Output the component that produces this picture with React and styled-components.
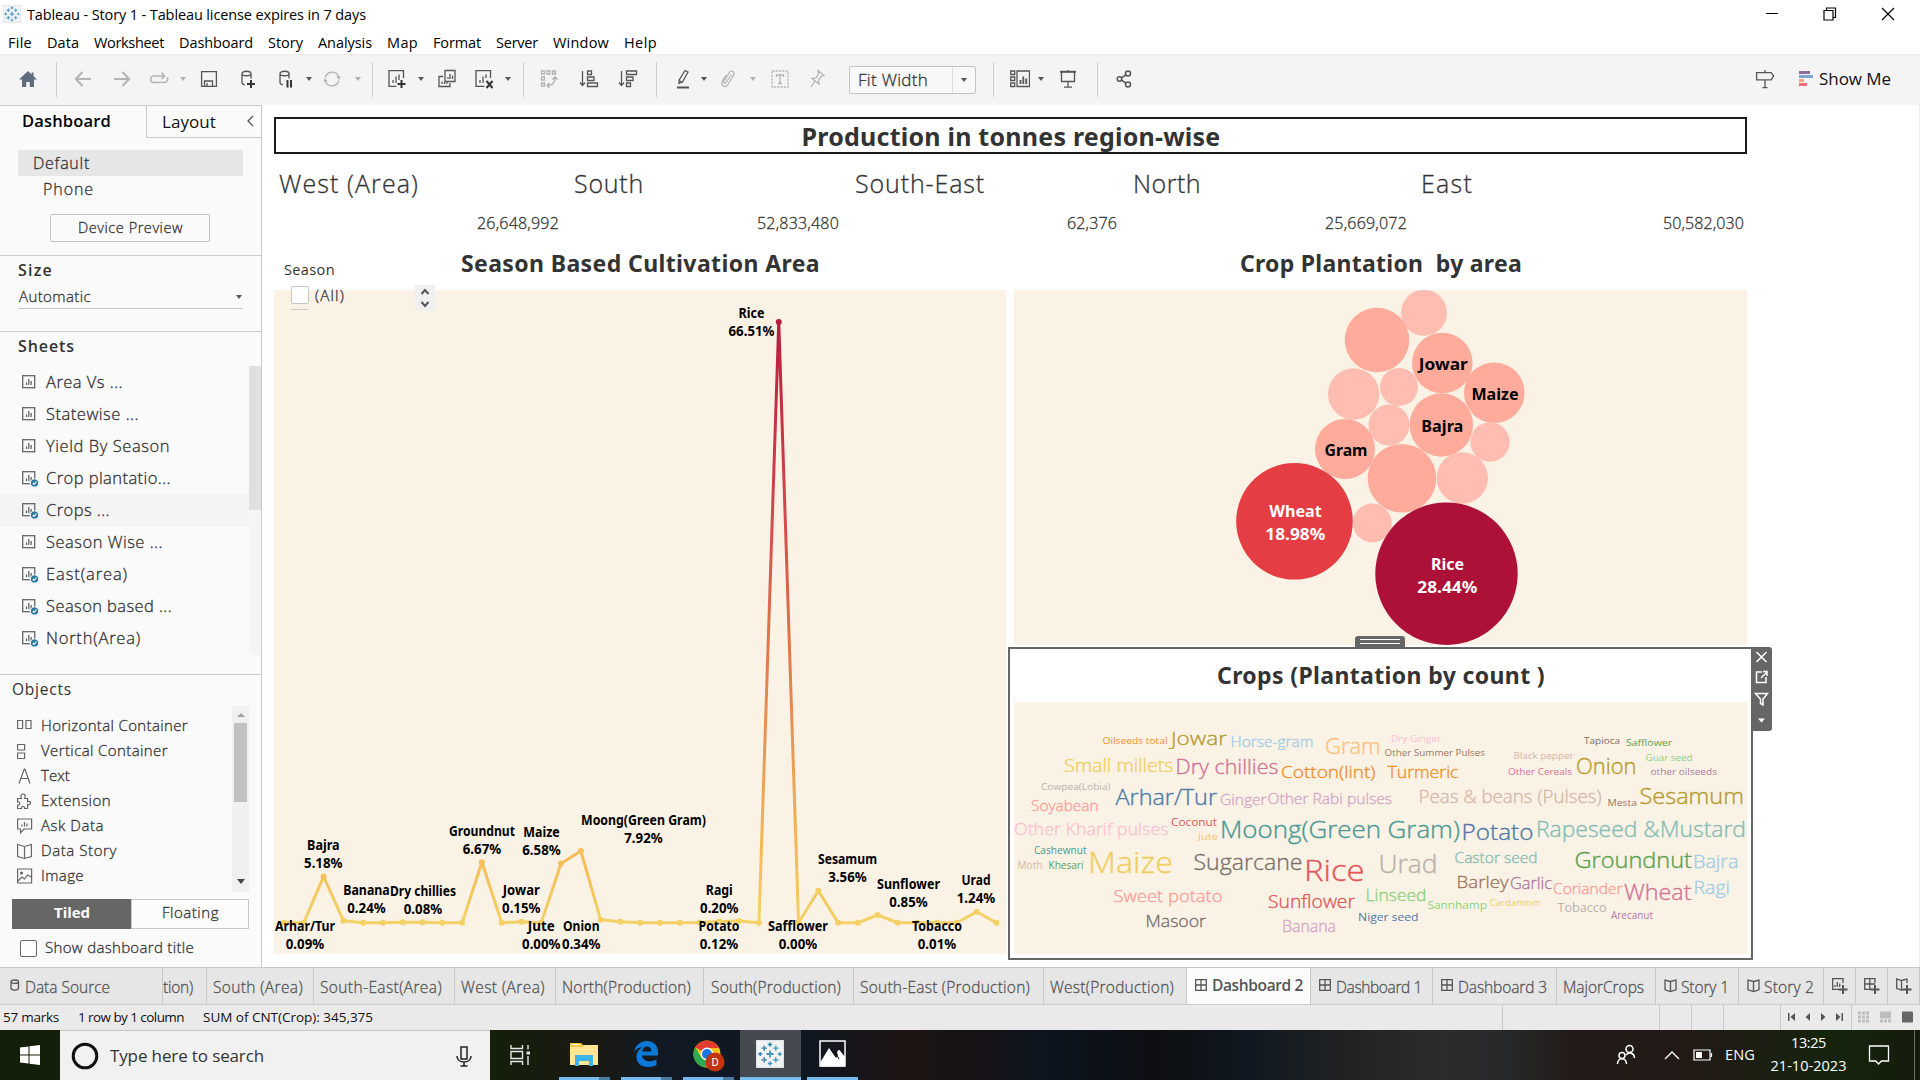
import React, { useLayoutEffect, useRef, useState } from 'react';
import styled, { createGlobalStyle, css } from 'styled-components';

const UI = '"Open Sans", "Noto Sans", sans-serif';
const HEAD = '"Noto Sans", "Open Sans", sans-serif';

const Global = createGlobalStyle`
  * { box-sizing: border-box; }
  body { margin: 0; background: #fff; font-family: ${UI}; color: #333; overflow: hidden; }
  svg { display: block; flex: none; }
`;

/* ---------- text ---------- */

/* Light cut thickened a little, between light and regular. */
const book = css`
  font-weight: 300;
  -webkit-text-stroke: 0.3px currentColor;
`;

const Text = styled.span`
  display: block;
  flex: none;
  white-space: pre;
  line-height: 1.3;
  font-family: ${(p) => p.$font || UI};
  font-size: ${(p) => p.$size || 15}px;
  font-weight: ${(p) => p.$weight || 400};
  ${(p) => p.$book && book}
  color: ${(p) => p.$color || '#333'};
  width: ${(p) => p.$w}px;
  margin-left: ${(p) => p.$ml || 0}px;
  margin-top: ${(p) => p.$mt || 0}px;
`;

/* Tracks a label so that it fills the given width. */
function Label({ w, size, weight, bookish, color, font, ml, mt, children }) {
  const ref = useRef(null);
  const [tracking, setTracking] = useState(0);
  useLayoutEffect(() => {
    const range = document.createRange();
    range.selectNodeContents(ref.current);
    const natural = range.getBoundingClientRect().width;
    setTracking((w + 1 - natural) / children.length);
  }, []);
  return (
    <Text ref={ref} $w={w} $size={size} $weight={weight} $book={bookish} $color={color} $font={font} $ml={ml} $mt={mt}
      style={{ letterSpacing: tracking }}>
      {children}
    </Text>
  );
}

/* ---------- frame ---------- */

const Page = styled.div`
  width: 1920px;
  height: 1080px;
  display: flex;
  flex-direction: column;
  background: #fff;
`;
const Row = styled.div`
  display: flex;
  align-items: center;
`;
const TitleBar = styled(Row)`
  height: 28px;
  padding: 0 25px 0 3px;
`;
const WindowButtons = styled(Row)`
  margin-left: auto;
  gap: 44px;
`;
const MenuBar = styled(Row)`
  height: 26px;
  padding: 4px 0 0 8px;
  gap: 16px;
`;
const Toolbar = styled(Row)`
  height: 51px;
  background: #f4f4f4;
  border-top: 1px solid #ececec;
  padding: 0 30px 2px 0;
`;
const Item = styled.div`
  flex: none;
  margin-left: ${(p) => p.$gap}px;
`;
const Separator = styled.div`
  flex: none;
  width: 1px;
  height: 35px;
  background: #cfcfcf;
  margin-left: ${(p) => p.$gap}px;
`;
const Caret = styled.div`
  flex: none;
  width: 0;
  height: 0;
  border: ${(p) => p.$size || 3}px solid transparent;
  border-top-color: ${(p) => p.$color || '#555'};
  border-top-width: ${(p) => (p.$size || 3) + 1}px;
  border-bottom: 0;
  margin-left: ${(p) => p.$gap || 0}px;
`;
const FitBox = styled(Row)`
  width: 127px;
  height: 28px;
  margin: 2px 0 0 22px;
  border: 1px solid #c4c4c4;
  border-radius: 2px;
  background: #f8f8f8;
  padding-left: 8px;
`;
const FitArrow = styled(Row)`
  width: 23px;
  height: 26px;
  margin-left: auto;
  justify-content: center;
  border-left: 1px solid #dcdcdc;
`;
const Spacer = styled.div`
  flex: 1;
`;

/* ---------- icons ---------- */

const Svg = ({ w = 20, h = 20, c = '#555', sw = 1.3, children }) => (
  <svg width={w} height={h} viewBox={`0 0 ${w} ${h}`} fill="none" stroke={c} strokeWidth={sw}>
    {children}
  </svg>
);

const PLUSES = [
  [0, 0, 3.6], [-5.8, -5.8, 2.8], [5.8, -5.8, 2.8], [-5.8, 5.8, 2.8], [5.8, 5.8, 2.8],
  [0, -9.5, 2.2], [0, 9.5, 2.2], [-9.8, 0, 2], [9.8, 0, 2],
];
const TableauLogo = ({ size }) => (
  <svg width={size} height={size} viewBox="-14 -14 28 28">
    <rect x="-14" y="-14" width="28" height="28" fill="#f0f2f4" stroke="#cfd3d6" strokeWidth="1" />
    {PLUSES.map(([x, y, r], i) => (
      <path key={i} d={`M${x - r} ${y}H${x + r}M${x} ${y - r}V${y + r}`} stroke={i % 2 ? '#2f7fb0' : '#3f97c6'} strokeWidth={i ? 1.3 : 1.8} />
    ))}
  </svg>
);

const Cylinder = <path d="M4 4.5c0-3 9-3 9 0s-9 3-9 0v9c0 1.5 1 2 3 2.3M13 4.5v5" />;
const Plus = ({ x = 14, y = 14, r = 4 }) => (
  <path d={`M${x - r} ${y}H${x + r}M${x} ${y - r}V${y + r}`} stroke="#333" strokeWidth="2" />
);

const ICONS = {
  home: <Svg><path d="M10 2 1 10.5h3V18h4.2v-5h3.6v5H16v-7.5h3L15.5 7V3.5H13.6V5.4Z" fill="#5f6d7e" stroke="none" /></Svg>,
  back: <Svg c="#b4b4b4" sw={2}><path d="M18 10H3M9.5 3 2.8 10l6.7 7" /></Svg>,
  forward: <Svg c="#b4b4b4" sw={2}><path d="M2 10h15M10.5 3l6.7 7-6.7 7" /></Svg>,
  redo: <Svg c="#b4b4b4" sw={1.6}><path d="M15 7H5C.5 7 .5 13.5 5 13.5h10c4 0 4.2-3.5 3.2-5M12.5 3.5 15.5 7l-3 3" /></Svg>,
  save: <Svg><path d="M2.6 2.6h14.8v14.8H2.6ZM5.5 17v-5h8v5M8 17v-3" /></Svg>,
  dbAdd: <Svg>{Cylinder}<Plus x={13} y={15} /></Svg>,
  dbPause: <Svg>{Cylinder}<path d="M11.5 11v7.5M15 11v7.5" stroke="#333" strokeWidth="2" /></Svg>,
  refresh: (
    <Svg c="#b4b4b4">
      <path d="M3.2 8.5A7.2 7.2 0 0 1 16.5 7M16.8 11.5A7.2 7.2 0 0 1 3.5 13" />
      <path d="M14 7.3h4.6L17.2 11ZM1.4 12.7H6L2.8 9Z" fill="#b4b4b4" stroke="none" />
    </Svg>
  ),
  sheetAdd: <Svg><path d="M16.5 9V1.6H2v15.8h7.5M6 14V11M9 14V7.5M12 11V5.5" /><Plus x={14.5} y={15} /></Svg>,
  duplicate: <Svg><path d="M8 1.5h10v11H8ZM11 10V8M13 10V5M15.5 10V6.5M6 7.5H2v10h11V14M5 15v-2.5M7.5 15v-2M10 15v-1.5" /></Svg>,
  clear: <Svg><path d="M16.5 9V1.6H2v15.8h8.5M6 14V11M9 14V7.5M12 9V5.5" /><path d="m12.5 12 6 7m0-7-6 7" stroke="#333" strokeWidth="2" /></Svg>,
  swap: <Svg c="#b0b0b0"><path d="M2.5 2h3v3h-3ZM8 2h3v3H8ZM13.5 2h3v3h-3ZM2.5 8h3v3h-3ZM2.5 14h3v3h-3ZM8.5 16.5c5 0 7.5-3 7.5-8M13.5 10.5 16 8l2.5 2.5M10.5 14 8 16.5l2.5 2.5" /></Svg>,
  asc: <Svg><path d="M3.5 2v14.5M1 13.5l2.5 3 2.5-3M8.5 2h4v3.5h-4ZM8.5 8h6.5v3.5H8.5ZM8.5 14h10v3.5h-10Z" /></Svg>,
  desc: <Svg><path d="M3.5 2v14.5M1 13.5l2.5 3 2.5-3M8.5 2h10v3.5h-10ZM8.5 8h6.5v3.5H8.5ZM8.5 14h4v3.5h-4Z" /></Svg>,
  pen: <Svg><path d="M12 1.5 15 3 9.5 13 6 14.5 6.2 11ZM6 11.5l3 1.5" /><path d="M4 18.5h12" strokeWidth="2" /></Svg>,
  clip: <Svg c="#b4b4b4"><path d="M13.5 5.5 8 13.5c-1 1.5-3 .3-2-1.3L11 4c2-3.5 6.5-1.3 4.5 2.5l-5.5 9c-2.5 4-8 1-5.5-3.5L8 6" /></Svg>,
  text: <Svg c="#b4b4b4"><path d="M2 2h16v16H2Z" strokeDasharray="2.2 1.2" /><path d="M6.5 8V6h7v2M10 6v8.5M8 14.5h4" /></Svg>,
  pin: <Svg c="#b4b4b4"><path d="m11 1.5 6 5-2.5.5-3 4 .5 4L5 9.5 9 9l2.5-4ZM8 12l-4 6" /></Svg>,
  cards: <Svg><path d="M.7 2h4v3.5h-4ZM.7 8h4v3.5h-4ZM.7 14h4v3.5h-4ZM7 2h12.5v15.5H7Z" /><path d="M10.5 15v-4M13.3 15V7.5M16.2 15V9.5" strokeWidth="1.8" /></Svg>,
  present: <Svg><path d="M2 2.8h16" strokeWidth="2" /><path d="M3.5 3v9.5h13V3M10 1v1M10 12.5V18M6 18.2h8" /></Svg>,
  share: <Svg sw={1.5}><circle cx="5.5" cy="10" r="2.2" /><circle cx="14" cy="4.5" r="2.5" /><circle cx="14" cy="15.5" r="2.5" /><path d="m7.5 8.8 4.3-2.8M7.5 11.2l4.3 2.8" /></Svg>,
  guide: <Svg><path d="M1.6 3.6h14.5l2.6 3.4-2.6 3.9H1.6ZM10 1v2.5M10 11v7.5M7.5 18.7h5" /></Svg>,
  showMe: (
    <svg width="14" height="16" viewBox="0 0 14 16">
      <path d="M0 0h11v3H0Z" fill="#8a6f9e" /><path d="M0 4h14v3H0Z" fill="#7ba4d0" />
      <path d="M0 8h5v3H0Z" fill="#f2a781" /><path d="M0 12h8v3H0Z" fill="#f96a7a" />
    </svg>
  ),
};

const GRAY = '#b0b0b0';
const TOOLS = [
  ['home', 18], ['|', 18], ['back', 16], ['forward', 19], ['redo', 17], ['v', 11, GRAY], ['save', 13],
  ['dbAdd', 19], ['dbPause', 18], ['v', 10], ['refresh', 10], ['v', 13, GRAY], ['|', 11], ['sheetAdd', 14],
  ['v', 11], ['duplicate', 13], ['clear', 17], ['v', 11], ['|', 12], ['swap', 15], ['asc', 20], ['desc', 19],
  ['|', 18], ['pen', 16], ['v', 8], ['clip', 11], ['v', 12, GRAY], ['text', 14], ['pin', 17], ['fit'],
  ['|', 17], ['cards', 16], ['v', 8], ['present', 14], ['|', 19], ['share', 16],
];

const MENUS = [
  ['File', 23], ['Data', 31], ['Worksheet', 69], ['Dashboard', 73], ['Story', 34], ['Analysis', 53],
  ['Map', 30], ['Format', 47], ['Server', 41], ['Window', 55], ['Help', 32],
];

function Tool({ kind, gap, color }) {
  if (kind === '|') return <Separator $gap={gap} />;
  if (kind === 'v') return <Caret $gap={gap} $color={color} />;
  if (kind === 'fit') {
    return (
      <FitBox>
        <Label w={69} size={17} bookish>Fit Width</Label>
        <FitArrow><Caret $size={3.5} /></FitArrow>
      </FitBox>
    );
  }
  return <Item $gap={gap}>{ICONS[kind]}</Item>;
}

/* ---------- sidebar ---------- */

const Body = styled.div`
  display: flex;
  height: 862px;
`;
const Sidebar = styled.aside`
  width: 262px;
  display: flex;
  flex-direction: column;
  background: #fafafa;
  border-right: 1px solid #cbcbcb;
  border-top: 1px solid #cbcbcb;
`;
const Tabs = styled(Row)`
  height: 32px;
`;
const ActiveTab = styled(Row)`
  width: 146px;
  height: 32px;
  padding: 0 0 2px 22px;
`;
const IdleTab = styled(Row)`
  flex: 1;
  height: 32px;
  padding: 0 7px 0 15px;
  justify-content: space-between;
  border-left: 1px solid #cbcbcb;
  border-bottom: 1px solid #cbcbcb;
`;
const Collapse = styled.div`
  margin-bottom: 2px;
`;
const Section = styled.section`
  height: ${(p) => p.$h}px;
  border-bottom: ${(p) => (p.$last ? 0 : 1)}px solid #cbcbcb;
  display: flex;
  flex-direction: column;
`;
const DeviceRow = styled(Row)`
  height: 26px;
  width: 225px;
  margin: ${(p) => (p.$on ? 12 : 0)}px 0 0 18px;
  padding-left: ${(p) => p.$indent}px;
  background: ${(p) => (p.$on ? '#e6e6e6' : 'none')};
`;
const PreviewButton = styled(Row)`
  width: 160px;
  height: 28px;
  margin: 12px 0 0 50px;
  justify-content: center;
  border: 1px solid #c4c4c4;
  border-radius: 2px;
`;
const SectionHead = styled(Row)`
  height: ${(p) => p.$h}px;
  padding-left: ${(p) => p.$pl}px;
`;
const SizeSelect = styled(Row)`
  width: 225px;
  height: 24px;
  margin-left: 18px;
  padding: 0 1px;
  justify-content: space-between;
  border-bottom: 1px solid #c4c4c4;
`;
const SheetArea = styled.div`
  display: flex;
  height: 289px;
`;
const SheetList = styled.div`
  width: 249px;
`;
const SheetRow = styled(Row)`
  height: 32px;
  padding-left: 21px;
  background: ${(p) => (p.$on ? '#f4f4f4' : 'none')};
`;
const Track = styled.div`
  width: 12px;
  background: #f5f5f5;
`;
const Thumb = styled.div`
  height: 144px;
  background: #e0e0e0;
`;
const ObjectArea = styled.div`
  display: flex;
  height: 186px;
`;
const ObjectList = styled.div`
  width: 232px;
  padding-top: 7px;
`;
const ObjectRow = styled(Row)`
  height: 25px;
  padding-left: 16px;
`;
const ObjectTrack = styled.div`
  width: 17px;
  background: #f0f0f0;
  display: flex;
  flex-direction: column;
  align-items: center;
  padding: 7px 0 8px;
`;
const ObjectThumb = styled.div`
  width: 13px;
  height: 79px;
  margin: 6px 0 auto;
  background: #c1c1c1;
`;
const UpArrow = styled.div`
  border: 4px solid transparent;
  border-top: 0;
  border-bottom-color: #a0a0a0;
`;
const Segments = styled(Row)`
  margin: 7px 0 0 12px;
`;
const Segment = styled(Row)`
  height: 30px;
  width: ${(p) => p.$w}px;
  justify-content: center;
  background: ${(p) => (p.$on ? '#666' : '#fcfcfc')};
  border: 1px solid ${(p) => (p.$on ? '#666' : '#c8c8c8')};
`;
const CheckRow = styled(Row)`
  height: 38px;
  padding-left: 20px;
`;
const CheckBox = styled.div`
  width: ${(p) => p.$s}px;
  height: ${(p) => p.$s}px;
  flex: none;
  background: #fff;
  border: 1px solid ${(p) => p.$c};
  border-radius: 2px;
`;

const SheetIcon = ({ used }) => (
  <svg width="18" height="18" viewBox="0 0 18 18" fill="none" stroke="#666" strokeWidth="1.3">
    <rect x="1.7" y="2.7" width="12" height="12" />
    <path d="M5.5 12V9.5M7.8 12V6M10.2 12V8" />
    {used && (
      <>
        <circle cx="13.5" cy="14" r="4.2" fill="#2f7da3" stroke="#fafafa" strokeWidth="1" />
        <path d="m11.8 14 1.3 1.3 2.3-2.6" stroke="#fff" strokeWidth="1.2" />
      </>
    )}
  </svg>
);
const SHEETS = [
  ['Area Vs ...', 76, false], ['Statewise ...', 92, false], ['Yield By Season', 123, false],
  ['Crop plantatio...', 124, true], ['Crops ...', 63, true], ['Season Wise ...', 116, false],
  ['East(area)', 81, true], ['Season based ...', 125, true], ['North(Area)', 94, true],
];
const objectGlyph = (children) => (
  <svg width="18" height="18" viewBox="0 0 18 18" fill="none" stroke="#666" strokeWidth="1.2">{children}</svg>
);
const OBJECTS = [
  ['Horizontal Container', 146, objectGlyph(<path d="M1.6 3.5h5v8h-5ZM10 3.5h5v8h-5Z" />)],
  ['Vertical Container', 126, objectGlyph(<path d="M1.6 2.5h7v5.5h-7ZM1.6 11h7v5.5h-7Z" />)],
  ['Text', 28, objectGlyph(<path d="M3 16.5 8.3 2h.6L14 16.5M4.8 11.5h7.5" />)],
  ['Extension', 69, objectGlyph(<path d="M1.6 6.5h3.9C4 3.5 5.5 2 7 2s3 1.5 1.6 4.5h3v3.2c4-1.5 4 4 0 2.8v4H8.5c.5-3-3.5-3-3 0H1.6v-3.5c3 .5 3-4 0-3Z" />)],
  ['Ask Data', 62, objectGlyph(<path d="M1.6 2h14v10H8l-3.5 4v-4H1.6ZM6 9.5V7.5M8.5 9.5V5M11 9.5V6.5" />)],
  ['Data Story', 75, objectGlyph(<path d="M8.5 4.5 1.6 2.5v12l6.9 2 6.9-2v-12ZM8.5 4.5v12" />)],
  ['Image', 42, objectGlyph(<><path d="M1.6 2h14v14h-14ZM2 14l4-4 2.5 2 3-4 4 2" /><circle cx="5.5" cy="6" r="1" fill="#666" /></>)],
];

function Side() {
  return (
    <Sidebar>
      <Tabs>
        <ActiveTab><Label w={88} size={16.5} weight={600} color="#000">Dashboard</Label></ActiveTab>
        <IdleTab>
          <Label w={53} size={17} color="#111" mt={1}>Layout</Label>
          <Collapse><Svg w={7} h={12}><path d="M6 1 1 6l5 5" /></Svg></Collapse>
        </IdleTab>
      </Tabs>
      <Section $h={118}>
        <DeviceRow $on $indent={15}><Label w={56} size={16} bookish>Default</Label></DeviceRow>
        <DeviceRow $indent={25}><Label w={50} size={16} bookish>Phone</Label></DeviceRow>
        <PreviewButton><Label w={104} size={14.5} bookish mt={1}>Device Preview</Label></PreviewButton>
      </Section>
      <Section $h={76}>
        <SectionHead $h={29} $pl={18}><Label w={34} size={16} weight={600}>Size</Label></SectionHead>
        <SizeSelect><Label w={71} size={15} bookish>Automatic</Label><Caret $size={3.5} /></SizeSelect>
      </Section>
      <Section $h={343}>
        <SectionHead $h={34} $pl={18}><Label w={56} size={16} weight={600} mt={-6}>Sheets</Label></SectionHead>
        <SheetArea>
          <SheetList>
            {SHEETS.map(([name, w, used]) => (
              <SheetRow key={name} $on={name === 'Crops ...'}>
                <SheetIcon used={used} />
                <Label w={w} size={16.5} bookish ml={7}>{name}</Label>
              </SheetRow>
            ))}
          </SheetList>
          <Track><Thumb /></Track>
        </SheetArea>
      </Section>
      <Section $h={292} $last>
        <SectionHead $h={31} $pl={12}><Label w={59} size={15.5} mt={-2}>Objects</Label></SectionHead>
        <ObjectArea>
          <ObjectList>
            {OBJECTS.map(([name, w, icon]) => (
              <ObjectRow key={name}>{icon}<Label w={w} size={15} bookish ml={7}>{name}</Label></ObjectRow>
            ))}
          </ObjectList>
          <ObjectTrack><UpArrow /><ObjectThumb /><Caret $size={4} $color="#444" /></ObjectTrack>
        </ObjectArea>
        <Segments>
          <Segment $w={119} $on><Label w={35} size={15} weight={700} color="#fff" mt={-2}>Tiled</Label></Segment>
          <Segment $w={118}><Label w={56} size={15} bookish mt={-2}>Floating</Label></Segment>
        </Segments>
        <CheckRow><CheckBox $s={17} $c="#666" /><Label w={148} size={15} bookish ml={8}>Show dashboard title</Label></CheckRow>
      </Section>
    </Sidebar>
  );
}

/* ---------- dashboard ---------- */

const Canvas = styled.main`
  width: 1658px;
  padding: 12px 0 0 12px;
  border-right: 1px solid #efefef;
  display: flex;
  flex-direction: column;
`;
const Banner = styled(Row)`
  width: 1473px;
  height: 37px;
  justify-content: center;
  border: 2px solid #1a1a1a;
`;
const Kpis = styled.div`
  display: flex;
  height: 88px;
`;
const Kpi = styled.div`
  width: ${(p) => p.$w}px;
  padding: 13px ${(p) => p.$pr}px 0 5px;
  display: flex;
  flex-direction: column;
  justify-content: flex-start;
`;
const KpiValue = styled.div`
  display: flex;
  justify-content: flex-end;
  margin-top: 13px;
`;
const Columns = styled.div`
  display: flex;
  gap: 8px;
`;
const Column = styled.div`
  width: ${(p) => p.$w}px;
  position: relative;
`;
const PanelTitle = styled(Row)`
  height: ${(p) => p.$h}px;
  padding-bottom: ${(p) => p.$pb || 0}px;
  justify-content: center;
`;
const Panel = styled.div`
  background: #faf3e5;
  height: ${(p) => p.$h}px;
`;
const Filter = styled.div`
  position: absolute;
  left: 10px;
  top: 19px;
  width: 151px;
`;
const FilterRow = styled(Row)`
  height: 26px;
  padding-left: 7px;
  margin-top: 6px;
  align-items: flex-start;
`;
const FilterItems = styled.div`
  width: 52px;
`;
const CutOff = styled.div`
  width: 17px;
  height: 1px;
  margin-top: 5px;
  background: #c8c8c8;
`;
const Spinner = styled.div`
  width: 20px;
  height: 26px;
  margin: -1px 0 0 auto;
  background: #f0f0f0;
  display: flex;
  align-items: center;
  justify-content: center;
`;
const Selected = styled.div`
  position: relative;
  margin: 2px -6px 0;
  width: 745px;
  height: 313px;
  padding: 0 4px;
  border: 2px solid #666;
  background: #fff;
`;
const Grip = styled.div`
  position: absolute;
  left: 345px;
  top: -13px;
  width: 50px;
  height: 12px;
  padding: 3px 5px;
  display: flex;
  flex-direction: column;
  gap: 3px;
  background: #666;
  border-radius: 3px 3px 0 0;
`;
const GripLine = styled.div`
  height: 1px;
  background: #fff;
`;
const SideTools = styled.div`
  position: absolute;
  left: 741px;
  top: -2px;
  width: 21px;
  height: 84px;
  background: #666;
  border-radius: 0 3px 3px 0;
  display: flex;
  flex-direction: column;
  align-items: center;
  padding-top: 3px;
`;

const KPIS = [
  ['West (Area)', 139, 295, 11, '26,648,992', 81],
  ['South', 69, 281, 12, '52,833,480', 81],
  ['South-East', 129, 278, 12, '62,376', 49],
  ['North', 67, 288, 10, '25,669,072', 81],
  ['East', 51, 331, 4, '50,582,030', 80],
];

const SERIES = [
  922.7, 922.7, 876.5, 920.7, 922.7, 922.7, 922.3, 922.3, 922.7, 922.7, 862.3, 922.7, 921.7,
  922.7, 863.5, 851, 919.8, 921.7, 922.7, 922.7, 922.7, 922.5, 921.5, 921, 922.7, 322, 922.7, 890.7,
  922.7, 922.7, 915, 922.7, 922.7, 922.7, 922.7, 911.7, 922.7,
].map((y, i) => [284 + i * 19.79, y]);

const MARK_LABELS = [
  ['Rice', 751.5, 318, 26, '66.51%', 46],
  ['Arhar/Tur', 305, 931.3, 60, '0.09%', 38.5],
  ['Bajra', 323.3, 850, 32.5, '5.18%', 38.5],
  ['Banana', 366.5, 894.5, 46.5, '0.24%', 38.5],
  ['Dry chillies', 423, 896.3, 66, '0.08%', 38.5],
  ['Groundnut', 482, 836.3, 66, '6.67%', 38.5],
  ['Maize', 541.5, 837.3, 36.5, '6.58%', 38.5],
  ['Moong(Green Gram)', 643.5, 825.3, 125, '7.92%', 38.5],
  ['Jowar', 521.3, 895.3, 37, '0.15%', 38.5],
  ['Jute', 541.3, 931.3, 27, '0.00%', 38.5],
  ['Onion', 581.3, 931.3, 36.5, '0.34%', 38.5],
  ['Ragi', 719.3, 895.3, 27, '0.20%', 38.5],
  ['Potato', 719, 931.3, 41, '0.12%', 38.5],
  ['Safflower', 798, 931.3, 60, '0.00%', 38.5],
  ['Sesamum', 847.5, 864.3, 59, '3.56%', 38.5],
  ['Sunflower', 908.5, 889.3, 63, '0.85%', 38.5],
  ['Urad', 976, 885.3, 29, '1.24%', 38.5],
  ['Tobacco', 937, 931.3, 50, '0.01%', 38.5],
];

const ChartText = styled.text`
  font-family: ${(p) => p.$font || HEAD};
  font-size: ${(p) => p.$size}px;
  font-weight: ${(p) => p.$weight || 700};
  fill: ${(p) => p.$fill || '#000'};
  text-anchor: ${(p) => p.$anchor || 'middle'};
`;
const Word = styled(ChartText)`
  font-weight: ${(p) => (p.$size > 14 ? 300 : 400)};
  stroke: ${(p) => p.$fill};
  stroke-width: ${(p) => (p.$size > 14 ? 0.35 : 0)};
`;

function LineChart() {
  return (
    <svg width="732" height="664" viewBox="274 290 732 664">
      <defs>
        <linearGradient id="heat" gradientUnits="userSpaceOnUse" x1="0" y1="923" x2="0" y2="322">
          <stop offset="0" stopColor="#f4d166" />
          <stop offset="0.1" stopColor="#f6bd58" />
          <stop offset="0.23" stopColor="#e9a557" />
          <stop offset="0.45" stopColor="#df7a50" />
          <stop offset="0.7" stopColor="#d2444a" />
          <stop offset="1" stopColor="#b71d3e" />
        </linearGradient>
      </defs>
      <polyline points={SERIES.map((p) => p.join(',')).join(' ')} fill="none" stroke="url(#heat)" strokeWidth="3" strokeLinejoin="round" />
      {SERIES.map(([x, y], i) => (
        <circle key={i} cx={x} cy={y} r="3" fill={y < 400 ? '#b71d3e' : y < 880 ? '#f6bf59' : '#f4d166'} />
      ))}
      {MARK_LABELS.map(([name, x, y, w, pct, pw]) => (
        <g key={name}>
          <ChartText $size={13.3} x={x} y={y} textLength={w} lengthAdjust="spacingAndGlyphs">{name}</ChartText>
          <ChartText $size={13.3} x={x} y={y + 18} textLength={pw} lengthAdjust="spacingAndGlyphs">{pct}</ChartText>
        </g>
      ))}
    </svg>
  );
}

const MID = '#ffab9c';
const PALE = '#ffbdb1';
const BUBBLES = [
  [1424, 312.8, 23, PALE], [1377, 340, 32.3, MID], [1442.3, 363, 30.3, MID], [1494.3, 392.7, 30.3, MID],
  [1353.7, 394, 25.7, PALE], [1399, 387, 19, PALE], [1389, 425, 20.5, PALE], [1441.3, 425, 31.7, MID],
  [1490, 442, 19.7, PALE], [1345, 449, 30, MID], [1402, 478.3, 34.3, MID], [1462.3, 478, 25.7, PALE],
  [1294.5, 521.3, 58.3, '#e43d44'], [1372.3, 523, 19.5, PALE], [1446.5, 573.7, 71.2, '#ad1137'],
];
const BUBBLE_LABELS = [
  ['Jowar', 1443.3, 370, 49], ['Maize', 1495, 400, 47], ['Bajra', 1442.3, 432, 42], ['Gram', 1346, 456, 43],
  ['Wheat', 1295.5, 517, 52.5, '#fff'], ['18.98%', 1295.3, 540, 60, '#fff'],
  ['Rice', 1447.5, 570, 33, '#fff'], ['28.44%', 1447.3, 593, 60, '#fff'],
];

const WORDS = [
  ['Oilseeds total', 1102.5, 1167.5, 744, 9.5, '#f28e2b'],
  ['Jowar', 1171, 1227, 745.3, 19, '#b6992d'],
  ['Horse-gram', 1230.5, 1313.5, 747.3, 15, '#a0cbe8'],
  ['Gram', 1325, 1380.5, 754, 22, '#ffbe7d'],
  ['Dry Ginger', 1391, 1441, 742, 9.5, '#fabfd2'],
  ['Other Summer Pulses', 1384.5, 1485, 755.7, 9.7, '#9d7660'],
  ['Small millets', 1064, 1173.5, 772.3, 18, '#f1ce63'],
  ['Dry chillies', 1175.5, 1278.5, 774, 19.5, '#d37295'],
  ['Cotton(lint)', 1281, 1375.5, 778.3, 16.5, '#f28e2b'],
  ['Turmeric', 1387.5, 1458.5, 778, 16.5, '#f28e2b'],
  ['Black pepper', 1513.5, 1573.5, 759, 9.5, '#d7b5a6'],
  ['Other Cereals', 1508, 1572, 775, 9.7, '#d37295'],
  ['Onion', 1576, 1636.5, 774, 21.5, '#b6992d'],
  ['Tapioca', 1584, 1620, 744, 9.7, '#79706e'],
  ['Safflower', 1626, 1672, 746, 9.7, '#59a14f'],
  ['Guar seed', 1645.5, 1692.5, 760.7, 9.7, '#8cd17d'],
  ['other oilseeds', 1650.5, 1717, 775, 9.7, '#b07aa1'],
  ['Cowpea(Lobia)', 1041, 1110.5, 789.7, 9.7, '#bab0ac'],
  ['Soyabean', 1031, 1098.5, 810.7, 15, '#ff9d9a'],
  ['Arhar/Tur', 1115.5, 1217, 805, 22, '#4e79a7'],
  ['Ginger', 1220, 1266.5, 804.7, 15, '#d4a6c8'],
  ['Other Rabi pulses', 1267.5, 1392, 804, 15, '#d4a6c8'],
  ['Peas & beans (Pulses)', 1418.5, 1601.5, 803, 18.5, '#d7b5a6'],
  ['Mesta', 1607.5, 1637, 806, 9.7, '#9d7660'],
  ['Sesamum', 1639.5, 1744, 804, 22, '#b6992d'],
  ['Other Kharif pulses', 1014, 1168.5, 835, 17, '#fabfd2'],
  ['Coconut', 1171, 1217, 825.7, 11.5, '#e15759'],
  ['Jute', 1198, 1218, 839.7, 9.7, '#ffbe7d'],
  ['Moong(Green Gram)', 1220, 1460, 837.7, 24.5, '#499894'],
  ['Potato', 1461.5, 1533.5, 840, 22, '#4e79a7'],
  ['Rapeseed &Mustard', 1536, 1746, 837, 22, '#86bcb6'],
  ['Cashewnut', 1034, 1086.5, 853.7, 10, '#499894'],
  ['Moth', 1017.5, 1042.5, 869, 10, '#d7b5a6'],
  ['Khesari', 1048.5, 1083.5, 869, 10, '#59a14f'],
  ['Maize', 1088, 1173, 872.7, 29, '#f1ce63'],
  ['Sugarcane', 1193.5, 1302.5, 870, 21.5, '#79706e'],
  ['Rice', 1304, 1364.5, 880.7, 29, '#e15759'],
  ['Urad', 1378.5, 1437.5, 872.7, 25.5, '#bab0ac'],
  ['Castor seed', 1454.5, 1537.5, 863, 15, '#86bcb6'],
  ['Groundnut', 1574.5, 1692, 867.7, 22, '#59a14f'],
  ['Bajra', 1693, 1738.5, 868, 18, '#a0cbe8'],
  ['Barley', 1456.5, 1508.5, 888.3, 17, '#9d7660'],
  ['Garlic', 1510, 1552, 888.7, 15.5, '#b07aa1'],
  ['Coriander', 1553, 1622.5, 894.3, 15, '#ff9d9a'],
  ['Wheat', 1624, 1691.5, 900, 22, '#d37295'],
  ['Ragi', 1693.5, 1730, 894.3, 18, '#a0cbe8'],
  ['Sweet potato', 1113.5, 1222.5, 902.3, 17, '#ff9d9a'],
  ['Sunflower', 1268, 1355, 908.3, 18, '#e15759'],
  ['Linseed', 1365.5, 1426.5, 901.3, 16.5, '#8cd17d'],
  ['Sannhamp', 1427.5, 1487, 909, 11.5, '#8cd17d'],
  ['Cardamom', 1489.5, 1540.5, 906, 9.7, '#f1ce63'],
  ['Tobacco', 1557.5, 1606.5, 912, 12.5, '#bab0ac'],
  ['Arecanut', 1611, 1653, 919, 10, '#b07aa1'],
  ['Masoor', 1145.5, 1206, 927, 17, '#79706e'],
  ['Niger seed', 1358, 1418.5, 921, 11.5, '#4e79a7'],
  ['Banana', 1282, 1336, 932, 16, '#d4a6c8'],
];

function Dashboard() {
  return (
    <Canvas>
      <Banner><Label w={418} size={25} weight={700} font={HEAD} mt={1}>Production in tonnes region-wise</Label></Banner>
      <Kpis>
        {KPIS.map(([name, w, col, pr, value, vw]) => (
          <Kpi key={name} $w={col} $pr={pr}>
            <Label w={w} size={25} bookish>{name}</Label>
            <KpiValue><Label w={vw} size={16} bookish>{value}</Label></KpiValue>
          </Kpi>
        ))}
      </Kpis>
      <Columns>
        <Column $w={732}>
          <PanelTitle $h={48} $pb={4}><Label w={358} size={23} weight={700} font={HEAD}>Season Based Cultivation Area</Label></PanelTitle>
          <Panel $h={664}><LineChart /></Panel>
          <Filter>
            <Label w={50} size={14.5}>Season</Label>
            <FilterRow>
              <FilterItems><CheckBox $s={18} $c="#c8c8c8" /><CutOff /></FilterItems>
              <Label w={29} size={15} bookish ml={-28}>(All)</Label>
              <Spinner><Svg w={10} h={22} sw={2}><path d="M1.5 7 5 3l3.5 4M1.5 15 5 19l3.5-4" /></Svg></Spinner>
            </FilterRow>
          </Filter>
        </Column>
        <Column $w={733}>
          <PanelTitle $h={48} $pb={4}><Label w={281} size={23} weight={700} font={HEAD}>Crop Plantation  by area</Label></PanelTitle>
          <Panel $h={355}>
            <svg width="733" height="355" viewBox="1014 290 733 355">
              {BUBBLES.map(([cx, cy, r, fill]) => <circle key={`${cx}-${cy}`} cx={cx} cy={cy} r={r} fill={fill} />)}
              {BUBBLE_LABELS.map(([t, x, y, w, fill]) => (
                <ChartText key={t} $size={16.5} $fill={fill} x={x} y={y} textLength={w} lengthAdjust="spacingAndGlyphs">{t}</ChartText>
              ))}
            </svg>
          </Panel>
          <Selected>
            <PanelTitle $h={53}><Label w={327} size={23} weight={700} font={HEAD}>Crops (Plantation by count )</Label></PanelTitle>
            <Panel $h={252}>
              <svg width="733" height="252" viewBox="1014 702 733 252">
                {WORDS.map(([t, x0, x1, y, size, fill]) => (
                  <Word key={t} $font={UI} $size={size} $fill={fill} $anchor="start"
                    x={x0} y={y} textLength={x1 - x0} lengthAdjust="spacingAndGlyphs">{t}</Word>
                ))}
              </svg>
            </Panel>
            <Grip><GripLine /><GripLine /></Grip>
            <SideTools>
              <svg width="15" height="80" viewBox="0 0 15 80" fill="none" stroke="#fff" strokeWidth="1.5">
                <path d="m2.5 2 10 10m0-10-10 10M8 22H2.5v10.5H12V27M7 28l5.5-5.5M9 21.5h4V26M1.5 43.5h12L9 49v6l-2.5-1.5V49Z" />
                <path d="M4 68.5h7l-3.5 4Z" fill="#fff" stroke="none" />
              </svg>
            </SideTools>
          </Selected>
        </Column>
      </Columns>
    </Canvas>
  );
}

/* ---------- bottom bars ---------- */

const TabBar = styled.div`
  display: flex;
  height: 38px;
  background: #e6e6e6;
  border-top: 1px solid #c9c9c9;
  border-bottom: 1px solid #cdcdcd;
`;
const SheetTab = styled(Row)`
  flex: none;
  width: ${(p) => p.$w}px;
  height: 36px;
  padding-left: ${(p) => p.$pl}px;
  overflow: hidden;
  border-right: 1px solid #c9c9c9;
  background: ${(p) => (p.$on ? '#fbfbfb' : 'none')};
`;
const AddTab = styled(SheetTab)`
  justify-content: center;
`;
const GridGlyph = () => <Svg w={12} h={14}><path d="M.7.7h10.6v10.6H.7ZM6 .7v10.6M.7 6h10.6" /></Svg>;
const BookGlyph = () => <Svg w={13} h={14}><path d="M6.5 2.5 1 1v9.8L6.5 12.5 12 10.8V1ZM6.5 2.5v10" /></Svg>;
const CanGlyph = () => <Svg w={10} h={14}><path d="M1 2.7c0-2.3 7.5-2.3 7.5 0s-7.5 2.3-7.5 0v6.6c0 2.3 7.5 2.3 7.5 0V2.7" /></Svg>;
const GLYPHS = { grid: <GridGlyph />, book: <BookGlyph />, can: <CanGlyph /> };

/* name, tab width, left padding, glyph, gap after glyph, text width */
const SHEET_TABS = [
  ['Data Source', 163, 10, 'can', 5, 84],
  ['tion)', 44, 0, null, 0, 29],
  ['South (Area)', 107, 6, null, 0, 89],
  ['South-East(Area)', 141, 6, null, 0, 121],
  ['West (Area)', 101, 6, null, 0, 83],
  ['North(Production)', 148, 6, null, 0, 128],
  ['South(Production)', 150, 7, null, 0, 129],
  ['South-East (Production)', 190, 6, null, 0, 169],
  ['West(Production)', 143, 6, null, 0, 123],
  ['Dashboard 2', 124, 8, 'grid', 5, 90],
  ['Dashboard 1', 122, 8, 'grid', 5, 85],
  ['Dashboard 3', 124, 8, 'grid', 5, 88],
  ['MajorCrops', 99, 6, null, 0, 80],
  ['Story 1', 83, 8, 'book', 4, 47],
  ['Story 2', 85, 8, 'book', 4, 49],
];
const ADD_GLYPHS = [
  <Svg key="s" w={17} h={18}><path d="M12 6V1.7H1.7v10.6H8M4 10V8M6.3 10V5M8.7 10V6.5" /><path d="M7.5 12.5h9M12 8v9" strokeWidth="2" /></Svg>,
  <Svg key="d" w={17} h={18}><path d="M12 6V1.7H1.7v10.6H8M6.8 1.7v10.6M1.7 7H12" /><path d="M7.5 12.5h9M12 8v9" strokeWidth="2" /></Svg>,
  <Svg key="b" w={17} h={18}><path d="M8 12.7 6.5 13 1.7 11.5V2l4.8 1.5L12 2v4M6.5 3.5v9" /><path d="M7.5 12.5h9M12 8v9" strokeWidth="2" /></Svg>,
];

const StatusBar = styled(Row)`
  height: 25px;
  background: #eaeaea;
  padding-left: 3px;
`;
const StatusCell = styled(Row)`
  width: ${(p) => p.$w}px;
  height: 25px;
  border-left: 1px solid #c9c9c9;
  justify-content: center;
  padding-bottom: 1px;
  margin-left: ${(p) => (p.$first ? 'auto' : 0)};
`;

const Taskbar = styled.div`
  display: flex;
  height: 50px;
  background: linear-gradient(90deg, #141f0a 0, #141f0a 500px, #1a1a14 600px, #111a24 660px, #0f1722 800px,
    #1c1412 900px, #171215 980px, #0d1521 1040px, #0d0f12 1155px, #101821 1250px, #202222 1340px, #2b2d2c 1440px,
    #27292a 1500px, #231b1a 1570px, #211a15 1700px, #1a1f10 1770px, #15240c 1840px, #141c0b 1920px);
`;
const Start = styled(Row)`
  width: 60px;
  justify-content: center;
`;
const Search = styled(Row)`
  width: 430px;
  background: #f1f1f1;
  border-top: 1px solid #c6c6c6;
  padding: 0 17px 0 11px;
`;
const TaskApp = styled.div`
  width: ${(p) => p.$w}px;
  margin-left: ${(p) => p.$gap}px;
  display: flex;
  flex-direction: column;
  align-items: center;
  justify-content: flex-end;
  background: ${(p) => (p.$on ? '#454950' : 'none')};
`;
const AppIcon = styled.div`
  height: 28px;
  margin-bottom: 9px;
  margin-right: ${(p) => p.$shift || 0}px;
`;
const Underline = styled.div`
  align-self: stretch;
  height: 3px;
  background: ${(p) => (p.$split ? 'linear-gradient(90deg, #76b9ed 40px, #4b7aa0 40px)' : '#76b9ed')};
`;
const Tray = styled(Row)`
  margin-left: auto;
  color: #fff;
`;
const Clock = styled.div`
  width: 76px;
  display: flex;
  flex-direction: column;
  align-items: center;
  gap: 4px;
  margin-left: 16px;
`;
const ShowDesktop = styled.div`
  width: 6px;
  height: 50px;
  margin-left: 24px;
  border-left: 1px solid #6a7064;
`;

const TaskView = () => (
  <Svg w={21} h={22} c="#e8e8e8" sw={1.4}>
    <path d="M1 1v3.5h11.5V1M1 7.5h11.5v7H1ZM1 21v-3.5h11.5V21M18 1v4.5M18 12v9" /><path d="M16.5 9h3.5" strokeWidth="3" />
  </Svg>
);
const Folder = () => (
  <svg width="28" height="28" viewBox="0 0 28 28">
    <path d="M0 3h11l2 2h15v20H0Z" fill="#f8c83c" /><path d="M0 7h13l2-2h13v20H0Z" fill="#ffe594" />
    <path d="M5 15h18v11h-4v-5H9v5H5Z" fill="#3cb4ea" /><path d="M2 4h7v1H2Z" fill="#fff" />
  </svg>
);
const Edge = () => (
  <svg width="26" height="28" viewBox="0 0 26 28">
    <path d="M1 12C2.5 5 7.5 1 14 1c7 0 11 5 11 11v3.5H9c.3 4 4 5.8 7.5 5.8 2.7 0 5-.7 7-1.8v5.5c-2.5 1.3-5 2-8.5 2-7 0-11.500-4-11.500-10 0-4.500 2.500-8 6.500-10C6.500 7.300 3 8.700 1 12Zm8.200-.5h9.300c0-3-1.500-5-4.500-5-2.500 0-4.400 2-4.800 5Z" fill="#0a79d8" />
  </svg>
);
const Chrome = () => (
  <svg width="32" height="32" viewBox="0 0 32 32">
    <circle cx="14" cy="14" r="13.5" fill="#fbc116" />
    <path d="M14 14 2.3 7.2A13.5 13.5 0 0 1 25.7 7.2L26 8H14Z" fill="#e33b2e" />
    <path d="M2.3 7.2A13.5 13.5 0 0 0 12 27.4L18.5 17 8 17Z" fill="#2da94f" />
    <circle cx="14" cy="14" r="6.5" fill="#fff" /><circle cx="14" cy="14" r="5" fill="#1a73e8" />
    <circle cx="22" cy="22" r="9.5" fill="#c0350f" />
    <ChartText $font="Roboto, sans-serif" $size={11} $weight={400} $fill="#fff" x="22" y="26">D</ChartText>
  </svg>
);
const Photos = () => (
  <svg width="28" height="28" viewBox="0 0 28 28">
    <rect x="1" y="1" width="25" height="25" fill="#14171d" stroke="#fff" strokeWidth="1.5" />
    <path d="M1.5 22 10 8l7 10 2-3c-2-3 0-5 1.5-5l5.5 7v9.5H1.5Z" fill="#fff" /><path d="m16 12 4 7" stroke="#14171d" />
  </svg>
);

export default function App() {
  return (
    <Page>
      <Global />
      <TitleBar>
        <TableauLogo size={18} />
        <Label w={338} size={14.5} color="#000" ml={6} mt={3}>Tableau - Story 1 - Tableau license expires in 7 days</Label>
        <WindowButtons>
          <Svg w={14} h={14} c="#000" sw={1}><path d="M1 6.5h12" /></Svg>
          <Svg w={14} h={14} c="#000" sw={1.2}><path d="M1 3.5h9v9.5H1ZM3.5 3.5V1h9v9.5H10" /></Svg>
          <Svg w={14} h={14} c="#000" sw={1.2}><path d="m1 1 12 12M13 1 1 13" /></Svg>
        </WindowButtons>
      </TitleBar>
      <MenuBar>
        {MENUS.map(([name, w]) => <Label key={name} w={w} size={14.5} color="#000">{name}</Label>)}
      </MenuBar>
      <Toolbar>
        {TOOLS.map(([kind, gap, color], i) => <Tool key={i} kind={kind} gap={gap} color={color} />)}
        <Spacer />
        <Item $gap={0}>{ICONS.guide}</Item>
        <Item $gap={24}>{ICONS.showMe}</Item>
        <Label w={71} size={17} color="#111" ml={6}>Show Me</Label>
      </Toolbar>
      <Body>
        <Side />
        <Dashboard />
      </Body>
      <TabBar>
        {SHEET_TABS.map(([name, w, pl, glyph, gap, tw]) => {
          const on = name === 'Dashboard 2';
          return (
            <SheetTab key={name} $w={w} $pl={pl} $on={on}>
              {glyph && GLYPHS[glyph]}
              <Label w={tw} size={15.5} weight={600} bookish={!on} color="#555" ml={gap} mt={on ? -1 : 2}>{name}</Label>
            </SheetTab>
          );
        })}
        {ADD_GLYPHS.map((g, i) => <AddTab key={i} $w={32} $pl={0}>{g}</AddTab>)}
      </TabBar>
      <StatusBar>
        <Label w={55} size={13.5} color="#111">57 marks</Label>
        <Label w={105} size={13.5} color="#111" ml={20}>1 row by 1 column</Label>
        <Label w={169} size={13.5} color="#111" ml={20}>SUM of CNT(Crop): 345,375</Label>
        <StatusCell $w={157} $first />
        <StatusCell $w={32} />
        <StatusCell $w={32} />
        <StatusCell $w={57} />
        <StatusCell $w={71}>
          <svg width="56" height="8" viewBox="0 0 56 8" fill="#555">
            <path d="M0 0h1.5v8H0ZM7 0v8L2.5 4ZM22 0v8l-4.5-4ZM33 0v8l4.5-4ZM48 0v8l4.5-4ZM53.5 0H55v8h-1.5Z" />
          </svg>
        </StatusCell>
        <StatusCell $w={69}>
          <svg width="56" height="12" viewBox="0 0 56 12">
            <path d="M0 .5h3v3H0ZM4 .5h3v3H4ZM8 .5h3v3H8ZM0 4.5h3v3H0ZM4 4.5h3v3H4ZM8 4.5h3v3H8ZM0 8.5h3v3H0ZM4 8.5h3v3H4ZM8 8.5h3v3H8ZM22 .5h11v7H22ZM22 8.5h3v3h-3ZM26 8.5h3v3h-3ZM30 8.5h3v3h-3Z" fill="#bdbdbd" />
            <rect x="44" y="0.5" width="11" height="11" rx="1" fill="#666" />
          </svg>
        </StatusCell>
      </StatusBar>
      <Taskbar>
        <Start>
          <svg width="20" height="20" viewBox="0 0 20 20" fill="#fff">
            <path d="M0 2.5 8.5 1.4V9.5H0ZM9.5 1.2 20 0v9.5H9.5ZM0 10.5h8.5v8L0 17.5ZM9.5 10.5H20V20L9.5 18.7Z" />
          </svg>
        </Start>
        <Search>
          <Svg w={28} h={28} c="#111" sw={3}><circle cx="14" cy="14" r="11.8" /></Svg>
          <Label w={153} size={17} color="#333" ml={11} mt={1}>Type here to search</Label>
          <Spacer />
          <Svg w={18} h={22} c="#222" sw={1.5}><path d="M6 2h6v12H6ZM2 11c0 8 14 8 14 0M9 17v4M5.5 21h7" /></Svg>
        </Search>
        <Start><TaskView /></Start>
        <TaskApp $w={51} $gap={9}><AppIcon $shift={2}><Folder /></AppIcon><Underline $split /></TaskApp>
        <TaskApp $w={51} $gap={11}><AppIcon $shift={2}><Edge /></AppIcon><Underline $split /></TaskApp>
        <TaskApp $w={51} $gap={11}><AppIcon><Chrome /></AppIcon><Underline $split /></TaskApp>
        <TaskApp $w={61} $gap={6} $on><AppIcon $shift={2}><TableauLogo size={28} /></AppIcon><Underline /></TaskApp>
        <TaskApp $w={51} $gap={6}><AppIcon><Photos /></AppIcon><Underline /></TaskApp>
        <Tray>
          <Svg w={20} h={22} c="#fff" sw={1.5}>
            <circle cx="13.5" cy="5" r="3.5" /><circle cx="6" cy="11.5" r="3" /><path d="M10 11c3-3.5 8.5-2 8.5 3M1.5 20c0-7 9-7 9 0" />
          </Svg>
          <Item $gap={28}><Svg w={16} h={10} c="#fff" sw={1.4}><path d="m1 9 7-7 7 7" /></Svg></Item>
          <Item $gap={13}><Svg w={20} h={12} c="#fff" sw={1.2}><path d="M1 1h16v10H1ZM18.5 4v4" /><path d="M3 3h6v6H3Z" fill="#fff" stroke="none" /></Svg></Item>
          <Label w={29} size={14.5} color="#fff" ml={12} mt={1}>ENG</Label>
          <Clock>
            <Label w={34} size={14.5} color="#fff">13:25</Label>
            <Label w={75} size={14.5} color="#fff">21-10-2023</Label>
          </Clock>
          <Item $gap={22}><Svg w={22} h={20} c="#fff" sw={1.3}><path d="M1.5 1h19v15h-7L10.5 19l-2.7-3H1.5Z" /></Svg></Item>
          <ShowDesktop />
        </Tray>
      </Taskbar>
    </Page>
  );
}
